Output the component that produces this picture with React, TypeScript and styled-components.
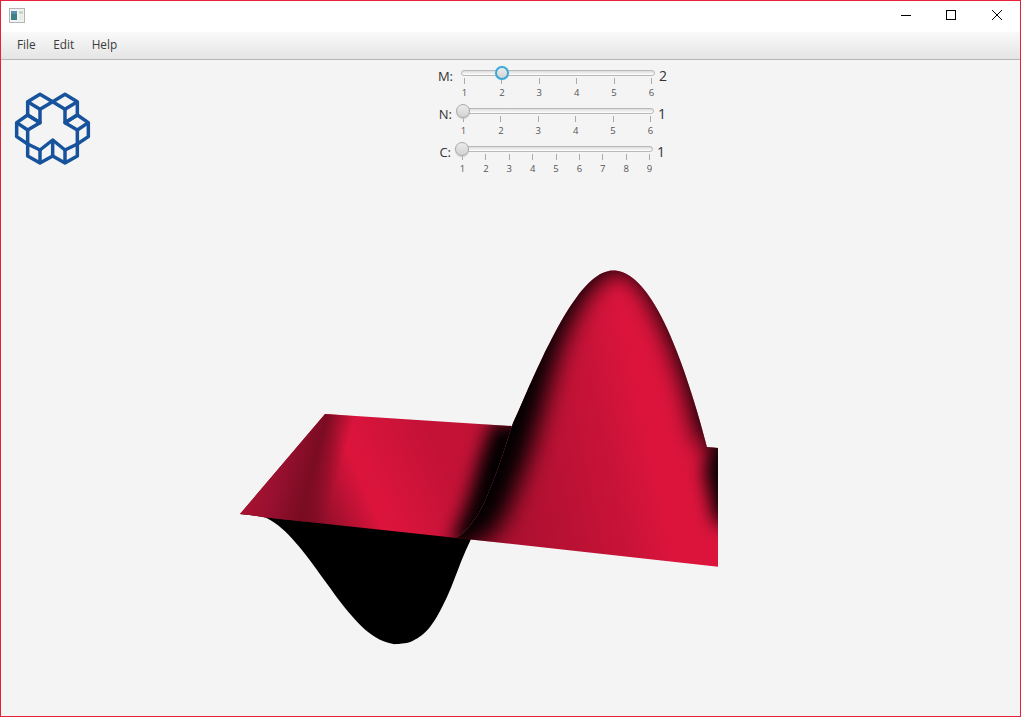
import React from "react";
import styled, { createGlobalStyle } from "styled-components";

const Global = createGlobalStyle`
  html, body { margin: 0; padding: 0; background: #f4f4f4; }
  #root { width: 1021px; height: 717px; }
`;

const Frame = styled.div`
  box-sizing: border-box;
  width: 1021px;
  height: 717px;
  border: 1px solid #e8213a;
  display: flex;
  flex-direction: column;
  background: #f4f4f4;
  font-family: "Open Sans", "Noto Sans", "Liberation Sans", sans-serif;
  overflow: hidden;
`;

const TitleBar = styled.div`
  height: 31px;
  flex: none;
  background: #fff;
  display: flex;
  align-items: flex-start;
  justify-content: space-between;
`;

const AppIcon = styled.svg`
  margin: 7px 0 0 8px;
  width: 16px;
  height: 15px;
`;

const WindowButtons = styled.div`
  display: flex;
  gap: 35px;
  padding: 9px 18px 0 0;
`;

const WinIcon = styled.svg<{ $extra?: number }>`
  width: 10px;
  height: 10px;
  display: block;
  margin-left: ${(p) => p.$extra ?? 0}px;
`;

const MenuBar = styled.div`
  height: 28px;
  flex: none;
  box-sizing: border-box;
  border-bottom: 1px solid #b6b6b6;
  background: linear-gradient(#f9f9f9, #e5e5e5);
  display: flex;
  align-items: center;
  padding: 0 0 3px 16px;
  gap: 17.5px;
`;

const MenuItem = styled.span`
  font-size: 11.8px;
  color: #3a3a3a;
  line-height: 24px;
`;

const TopRow = styled.div`
  height: 125px;
  flex: none;
  display: flex;
  align-items: flex-start;
`;

const Logo = styled.svg`
  width: 78px;
  height: 73px;
  flex: none;
  margin: 32px 0 0 12px;
`;

const Sliders = styled.div`
  display: flex;
  flex-direction: column;
  gap: 6px;
  margin: 6px 0 0 338px;
`;

const SliderRow = styled.div<{ $shift: number }>`
  display: flex;
  align-items: flex-start;
  margin-left: ${(p) => p.$shift}px;
  height: 32px;
`;

const RowLabel = styled.span`
  width: 24px;
  margin: 3px 8px 0 0;
  text-align: right;
  font-size: 13px;
  line-height: 14px;
  color: #333;
`;

const RowValue = styled.span`
  margin: 3px 0 0 4px;
  font-size: 14px;
  line-height: 14px;
  color: #333;
`;

const SliderBody = styled.div`
  width: 194px;
  display: flex;
  flex-direction: column;
`;

const TrackWrap = styled.div`
  position: relative;
  height: 14px;
  display: flex;
  align-items: center;
`;

const Track = styled.div`
  box-sizing: border-box;
  width: 100%;
  height: 6px;
  border-radius: 3px;
  border: 1px solid #b9b9b9;
  background: linear-gradient(#dcdcdc, #ffffff);
`;

const Thumb = styled.div<{ $focus: boolean }>`
  position: absolute;
  top: 0;
  box-sizing: border-box;
  width: 14px;
  height: 14px;
  margin-left: -7px;
  border-radius: 50%;
  background: linear-gradient(#ececec, #d2d2d2);
  border: ${(p) => (p.$focus ? "2px solid #3aa9d8" : "1px solid #a8a8a8")};
  box-shadow: ${(p) => (p.$focus ? "0 0 1px #7cc7e6" : "0 1px 1px #c8c8c8")};
`;

const Ticks = styled.div`
  display: flex;
  justify-content: space-between;
  padding: 0 3px;
  margin-top: -2px;
`;

const TickItem = styled.div`
  width: 1px;
  display: flex;
  flex-direction: column;
  align-items: center;
`;

const TickMark = styled.div`
  width: 1px;
  height: 6px;
  flex: none;
  background: #a9a9a9;
`;

const TickLabel = styled.span`
  font-size: 9.5px;
  line-height: 12px;
  margin-top: 3px;
  color: #555;
`;

const Plot = styled.svg`
  display: block;
  width: 1019px;
  flex: 1;
  min-height: 0;
`;

type Pt = [number, number];

const spline = (pts: Pt[], move = true): string => {
  let d = move ? `M${pts[0][0]} ${pts[0][1]}` : `L${pts[0][0]} ${pts[0][1]}`;
  for (let i = 0; i < pts.length - 1; i++) {
    const p0 = pts[Math.max(i - 1, 0)];
    const p1 = pts[i];
    const p2 = pts[i + 1];
    const p3 = pts[Math.min(i + 2, pts.length - 1)];
    d += `C${(p1[0] + (p2[0] - p0[0]) / 6).toFixed(1)} ${(p1[1] + (p2[1] - p0[1]) / 6).toFixed(1)} ${(p2[0] - (p3[0] - p1[0]) / 6).toFixed(1)} ${(p2[1] - (p3[1] - p1[1]) / 6).toFixed(1)} ${p2[0]} ${p2[1]}`;
  }
  return d;
};

const sample = (from: number, to: number, step: number, f: (x: number) => number): Pt[] => {
  const out: Pt[] = [];
  for (let x = from; x <= to; x += step) out.push([x, +f(x).toFixed(2)]);
  return out;
};

const foldLow: Pt[] = [[457, 538], [464, 532], [472, 523], [480, 511], [488, 494], [497, 471], [504, 451]];
const humpUp: Pt[] = sample(512, 707, 5, (x) => {
  const dx = Math.abs(x - 613.5);
  const k = x < 613.5 ? 0.0222 - 0.00007 * dx : 0.0202;
  return 270.5 + k * dx * dx;
});
const humpFull: Pt[] = [...foldLow, ...humpUp];
const lobe: Pt[] = [
  [240, 514],
  ...sample(250, 397, 7, (x) => 514 + (130 * (1 - Math.cos((Math.PI * (x - 250)) / 147))) / 2),
  [413, 640.7],
  [430, 627],
  [447, 597],
  [463, 557],
  [472, 537],
];

const humpPath = spline(humpFull) + "L718 448L718 566.7L457 538Z";
const panelPath =
  "M240 514L325 414L" + humpUp[0].join(" ") +
  spline([...foldLow].reverse(), false) +
  "L262 517Q250 514.6 240 514Z";
const lobePath = spline(lobe) + "Z";

const humpShade =
  "M440 560L470 548" +
  spline(
    [[488, 538], [503, 520], [524, 470], [537, 430], [560, 350], [585, 297], [615, 270], [640, 284], [664, 328], [683, 380], [700, 445]],
    false
  ) +
  "L740 445L740 200L440 200Z";
const panelShade =
  spline([[452, 545], [456, 530], [463, 514], [471, 490], [478, 465], [486, 440], [492, 422]]) +
  "L580 422L580 550Z";
const rightWedge = "M714 440L704 470L716 525L735 525L735 440Z";

const Surface = () => (
  <Plot viewBox="1 185 1019 531">
    <defs>
      <linearGradient id="panelFill" gradientUnits="userSpaceOnUse" x1="300" y1="502" x2="520" y2="404">
        <stop offset="0" stopColor="#7e0d25" />
        <stop offset="0.27" stopColor="#dc143c" />
        <stop offset="0.33" stopColor="#da143c" />
        <stop offset="0.6" stopColor="#c41236" />
        <stop offset="1" stopColor="#c01236" />
      </linearGradient>
      <linearGradient id="panelLeft" gradientUnits="userSpaceOnUse" x1="240" y1="514" x2="336.4" y2="540.7">
        <stop offset="0" stopColor="#a91230" />
        <stop offset="0.25" stopColor="#9a1030" />
        <stop offset="0.58" stopColor="#7a0c22" />
        <stop offset="0.85" stopColor="#7a0c22" stopOpacity="0" />
      </linearGradient>
      <linearGradient id="humpFill" gradientUnits="userSpaceOnUse" x1="480" y1="490" x2="720" y2="440">
        <stop offset="0" stopColor="#a80f2e" />
        <stop offset="0.3" stopColor="#b81133" />
        <stop offset="0.55" stopColor="#c91338" />
        <stop offset="0.72" stopColor="#dc143c" />
        <stop offset="0.92" stopColor="#dc143c" />
        <stop offset="1" stopColor="#c01236" />
      </linearGradient>
      <filter id="blurSoft" filterUnits="userSpaceOnUse" x="150" y="150" width="700" height="500">
        <feGaussianBlur stdDeviation="12" />
      </filter>
      <filter id="blurWide" filterUnits="userSpaceOnUse" x="150" y="150" width="700" height="500">
        <feGaussianBlur stdDeviation="9" />
      </filter>
      <clipPath id="humpClip">
        <path d={humpPath} />
      </clipPath>
      <clipPath id="panelClip">
        <path d={panelPath} />
      </clipPath>
    </defs>
    <path d={lobePath} fill="#000" />
    <path d={panelPath} fill="url(#panelFill)" />
    <path d={panelPath} fill="url(#panelLeft)" />
    <g clipPath="url(#panelClip)">
      <path d={panelShade} fill="#000" filter="url(#blurWide)" />
    </g>
    <path d={humpPath} fill="url(#humpFill)" />
    <g clipPath="url(#humpClip)">
      <path d={humpShade} fill="#000" filter="url(#blurSoft)" />
      <path d={rightWedge} fill="#000" filter="url(#blurWide)" />
    </g>
  </Plot>
);

const LogoMark = () => (
  <Logo viewBox="39 36 234 219" fill="none" stroke="#17539c" strokeWidth="10.5" strokeLinejoin="round">
    <path d="M120 43L158 65L120 88L83 65Z" />
    <path d="M195 43L232 65L195 88L158 65Z" />
    <path d="M83 65V105L120 128V88" />
    <path d="M232 65V105L195 128V88" />
    <path d="M83 105L120 128L83 150L50 128Z" />
    <path d="M232 105L265 128L232 150L195 128Z" />
    <path d="M50 128V170L83 192V150" />
    <path d="M265 128V170L232 192V150" />
    <path d="M83 192V228L120 249L158 228V180L120 210L83 192" />
    <path d="M232 192V228L195 249L158 228M158 180L195 210L232 192" />
    <path d="M120 210V249M195 210V249" />
  </Logo>
);

const SliderControl = ({
  name,
  value,
  max,
  shift,
  focus = false,
}: {
  name: string;
  value: number;
  max: number;
  shift: number;
  focus?: boolean;
}) => (
  <SliderRow $shift={shift}>
    <RowLabel>{name}</RowLabel>
    <SliderBody>
      <TrackWrap>
        <Track />
        <Thumb $focus={focus} style={{ left: `${3 + ((value - 1) / (max - 1)) * 188}px` }} />
      </TrackWrap>
      <Ticks>
        {Array.from({ length: max }, (_, i) => (
          <TickItem key={i}>
            <TickMark />
            <TickLabel>{i + 1}</TickLabel>
          </TickItem>
        ))}
      </Ticks>
    </SliderBody>
    <RowValue>{value}</RowValue>
  </SliderRow>
);

export default function App() {
  return (
    <>
      <Global />
      <Frame>
        <TitleBar>
          <AppIcon viewBox="0 0 16 15">
            <rect x="0.5" y="0.5" width="15" height="14" fill="#f2f2f2" stroke="#b4b4b4" />
            <rect x="2" y="3" width="6" height="9" fill="#3d7f86" />
            <rect x="2" y="3" width="6" height="3" fill="#5a8fb4" />
            <rect x="10" y="3" width="4" height="3" fill="#c4d8c8" />
            <rect x="10" y="7" width="4" height="5" fill="#e6ece6" />
          </AppIcon>
          <WindowButtons>
            <WinIcon viewBox="0 0 10 10">
              <path d="M0 5.5H10" stroke="#000" strokeWidth="1" />
            </WinIcon>
            <WinIcon viewBox="0 0 10 10">
              <rect x="0.5" y="0.5" width="9" height="9" fill="none" stroke="#000" />
            </WinIcon>
            <WinIcon viewBox="0 0 10 10" $extra={1}>
              <path d="M0 0L10 10M10 0L0 10" stroke="#000" strokeWidth="1" />
            </WinIcon>
          </WindowButtons>
        </TitleBar>
        <MenuBar>
          <MenuItem>File</MenuItem>
          <MenuItem>Edit</MenuItem>
          <MenuItem>Help</MenuItem>
        </MenuBar>
        <TopRow>
          <LogoMark />
          <Sliders>
            <SliderControl name="M:" value={2} max={6} shift={0} focus />
            <SliderControl name="N:" value={1} max={6} shift={-1} />
            <SliderControl name="C:" value={1} max={9} shift={-2} />
          </Sliders>
        </TopRow>
        <Surface />
      </Frame>
    </>
  );
}
